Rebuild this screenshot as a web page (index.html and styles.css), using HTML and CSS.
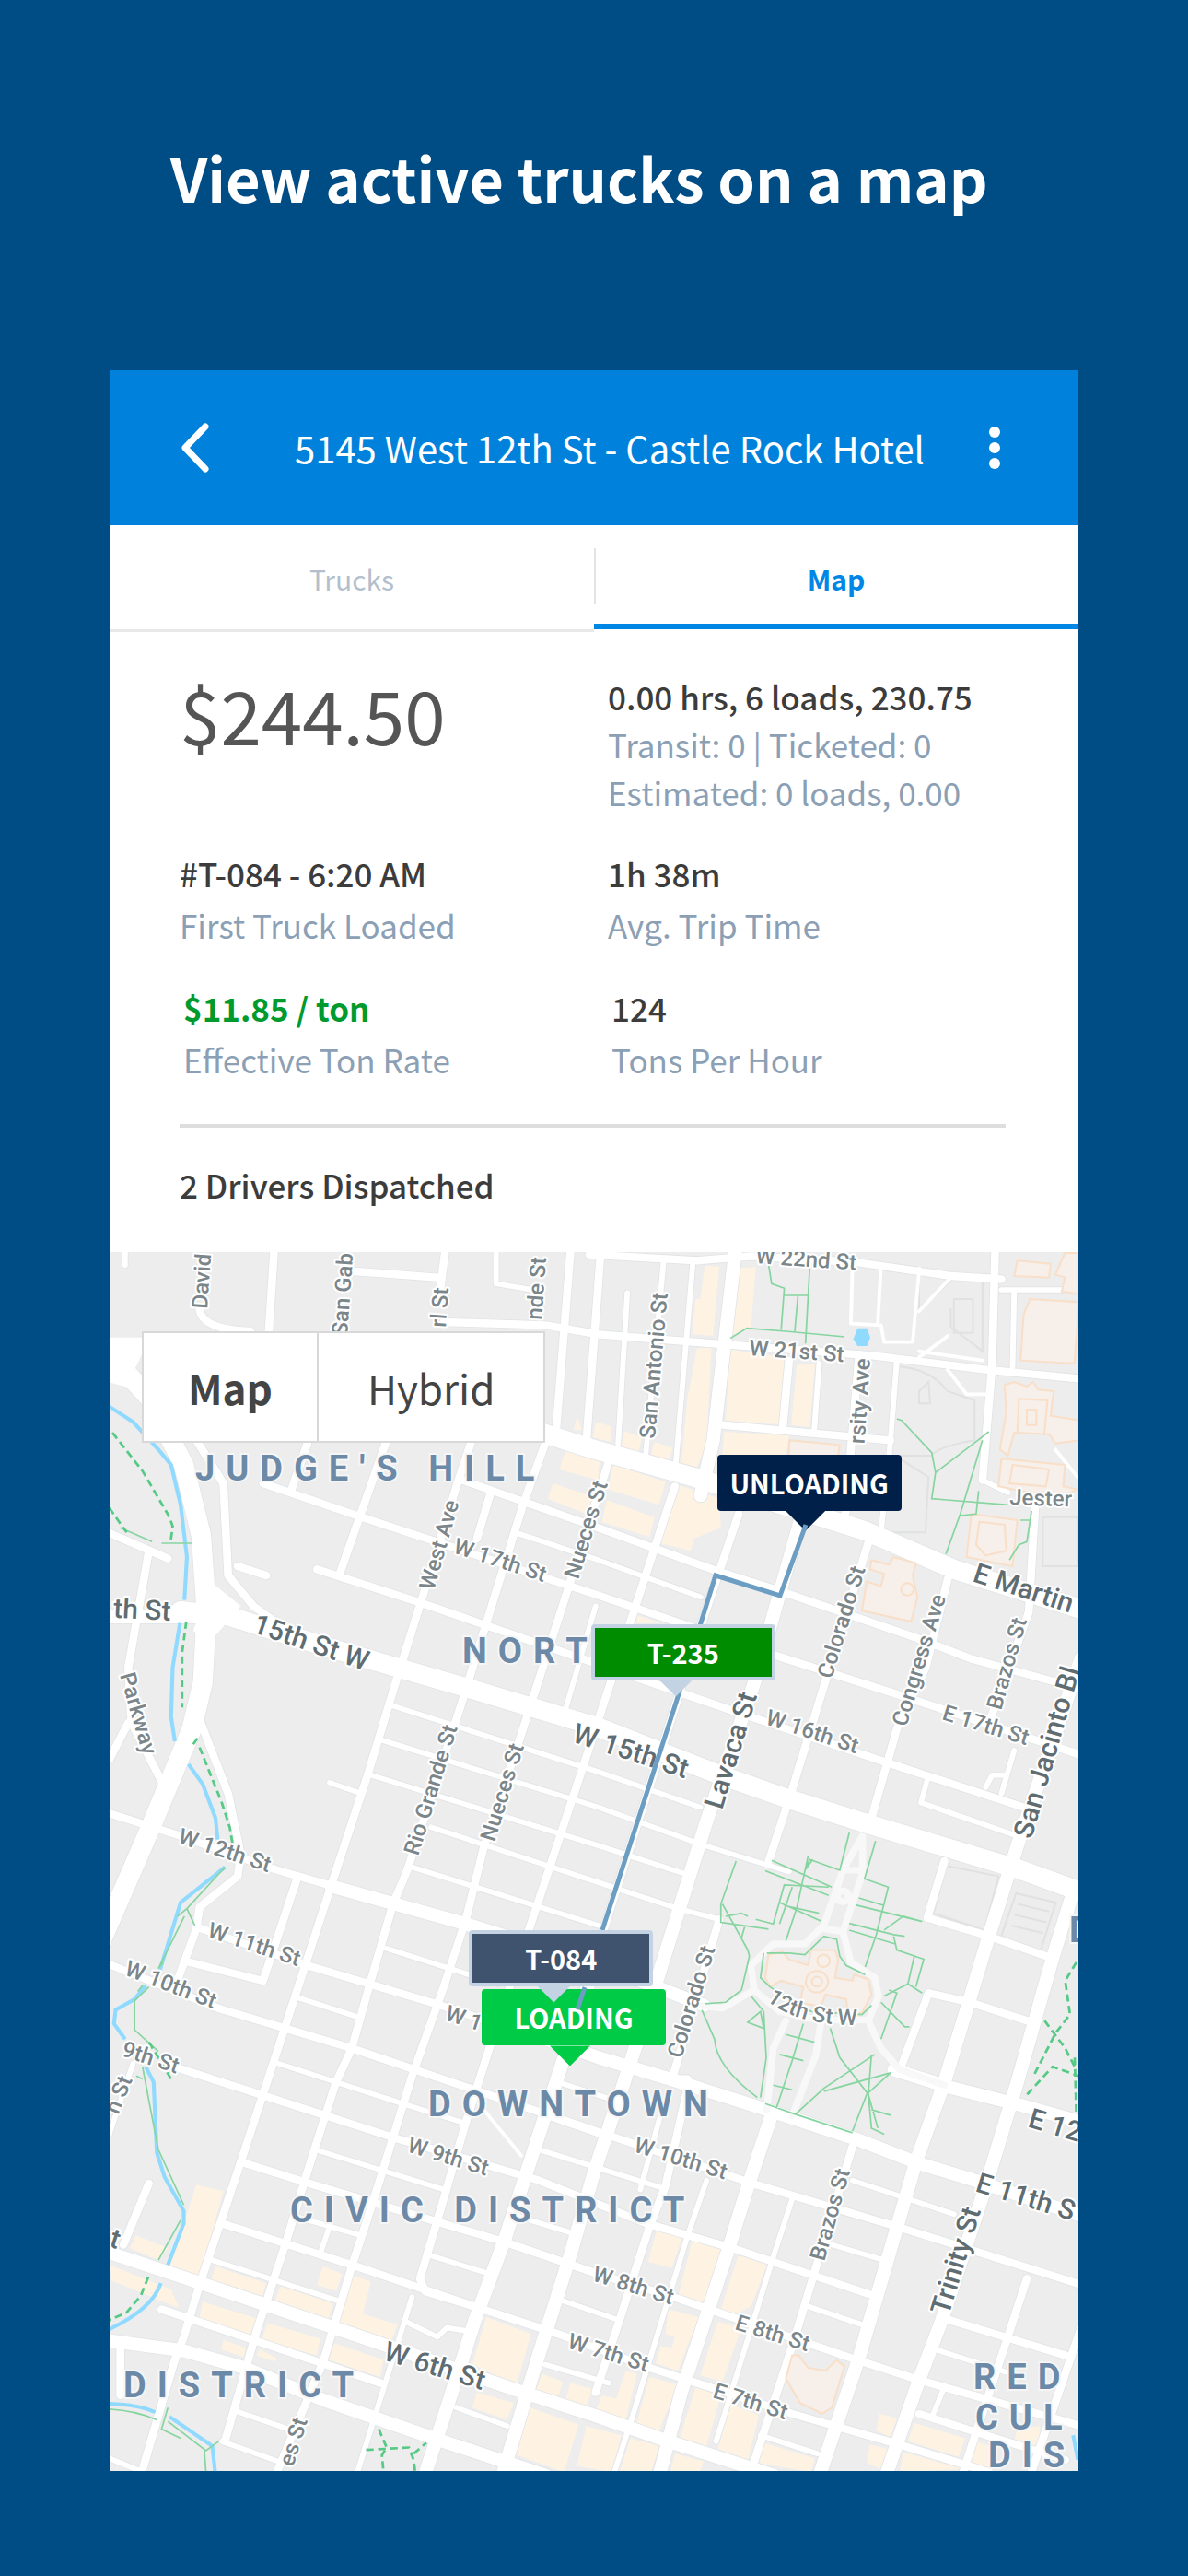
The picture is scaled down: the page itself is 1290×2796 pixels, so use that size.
FILE: index.html
```html
<!DOCTYPE html>
<html lang="en">
<head>
<meta charset="utf-8">
<meta name="viewport" content="width=device-width, initial-scale=1">
<title>View active trucks on a map</title>
<link rel="stylesheet" href="styles.css">
</head>
<body>
<h1 class="headline">View active trucks on a map</h1>
<main class="phone">
  <header class="bar">
    <button class="icon-button" type="button" aria-label="Back">
      <svg width="32" height="56" viewBox="0 0 32 56"><path class="chevron" d="M28 5 6 28l22 23"/></svg>
    </button>
    <h2 class="bar-title">5145 West 12th St - Castle Rock Hotel</h2>
    <button class="icon-button" type="button" aria-label="More options">
      <svg width="14" height="48" viewBox="0 0 14 48" fill="#fff"><circle cx="7" cy="7" r="6"/><circle cx="7" cy="24" r="6"/><circle cx="7" cy="41" r="6"/></svg>
    </button>
  </header>
  <nav class="tabs">
    <a class="tab" href="#trucks">Trucks</a>
    <a class="tab tab-active" href="#map" aria-current="page">Map</a>
  </nav>
  <section class="details">
    <div class="row row-top">
      <p class="amount">$244.50</p>
      <div>
        <p class="value">0.00 hrs, 6 loads, 230.75</p>
        <p class="label">Transit: 0 | Ticketed: 0</p>
        <p class="label">Estimated: 0 loads, 0.00</p>
      </div>
    </div>
    <div class="row">
      <div><p class="value">#T-084 - 6:20 AM</p><p class="label">First Truck Loaded</p></div>
      <div><p class="value">1h 38m</p><p class="label">Avg. Trip Time</p></div>
    </div>
    <div class="row row-inset">
      <div><p class="value value-rate">$11.85 / ton</p><p class="label">Effective Ton Rate</p></div>
      <div><p class="value">124</p><p class="label">Tons Per Hour</p></div>
    </div>
    <hr class="rule">
    <p class="value">2 Drivers Dispatched</p>
  </section>
  <section class="map" id="map" aria-label="Map">
    <svg class="map-art" viewBox="0 0 1052 1323">
      <defs>
        <g id="roads-large">
          <path d="M1000 470 1390 615 1539 665 1869 760 2409 935 2689 1060 3090 1190"/>
          <path d="M250 1195 400 1212 700 1310 1150 1445 1568 1575 1939 1725 2159 1805 2419 1890 2889 2035 3090 2110"/>
          <path d="M0 330 150 500 260 720 315 950 332 1200 320 1430 285 1580 160 1890 0 2270"/>
        </g>
        <g id="roads-wide">
          <path d="M25 1215H300M2000 20 1965 330 1930 640 1890 820M1540 2400 1450 2680 1270 3250 1180 3500 1090 3790 1020 4010"/>
          <path d="M2205 900 2059 1430 1909 1880 1749 2410 1649 2730 1555 3020 1480 3290 1370 3650 1265 4010"/>
          <path d="M2110 2850 2039 3070 1979 3270 1829 3740 1760 4010M3090 1350 2889 1960 2799 2255 2659 2730 2569 2990 2389 3630 2265 4010"/>
          <path d="M3059 2130 2999 2330 2889 2730 2789 3070 2649 3510 2579 3700 2475 4010M1400 2590 1568 2650 1809 2725 2099 2820 2379 2915 2579 2995 2739 3045 3090 3165"/>
          <path d="M2500 2690 2669 2745 2900 2805 3090 2860M10 3280 300 3380 720 3525 1330 3740 1568 3820 1789 3900 2120 4010M10 3570 260 3605 450 3660 700 3765 1050 3890 1400 4010M725 2092 1150 2215 1600 2360 1900 2480"/>
        </g>
        <g id="roads-small">
          <path d="M10 1850 240 1925 540 2035 740 2095M510 780 820 890 1568 1145 1739 1205 2139 1345 2519 1470 3090 1665M1140 770 1568 925 1939 1065 2139 1130 2589 1290 2739 1350 3090 1450M680 1060 1010 1170 1989 1520 2479 1690 2909 1835"/>
          <path d="M300 2225 650 2350 1070 2480 1420 2600M10 2340 370 2490 790 2620 1619 2910 2069 3065 2539 3210 3090 3390M230 2680 920 2910 1380 3050 1719 3190 1989 3270 2419 3420M440 2990 640 3055 1270 3250 1568 3355 1819 3435 2369 3630 2579 3700 3090 3850M380 3190 790 3325 1190 3465 1440 3550 1729 3660 2179 3810 2499 3905 2800 4000"/>
          <path d="M1165 650 1120 790 1010 1160 925 1440 840 1730 725 2090 640 2360 510 2770 440 2990 375 3190 310 3390 260 3560 230 3640 125 4010M900 640 750 1080M650 650 600 800M1225 820 1185 960"/>
          <path d="M1400 650 1330 850 1210 1250 1135 1500 965 2040 920 2150 850 2400 790 2620 740 2730 640 3055 580 3260 490 3540 390 3900M1600 710 1470 1130 1330 1580 1205 1970 1150 2200 1080 2420 980 2710 860 3110 790 3330 700 3640 550 4010"/>
          <path d="M1809 790 1669 1230 1530 1670 1350 2230 1230 2600 1150 2860 1080 3110 1005 3370 1022 3412 1190 3465M2010 880 1889 1250 1809 1510 1579 2250M2420 970 2279 1440 2175 1790 2105 2010M1949 2200 1800 2720 1849 2720M1849 2750 1779 3070 1729 3200 1639 3490 1559 3740"/>
          <path d="M2670 1090 2600 1380 2509 1580 2429 1870M2945 860 2925 1200 2800 1560M2369 2940 2249 3350 2179 3590 2045 4010M2659 2010 2605 2195 2799 2255 3009 2330M2519 2690 2609 2440 2739 2470 2919 2530M3090 3530 2930 4010M2919 3370 2859 3560 2759 3870 2715 4010M2659 3500 3040 3620M2579 3810 2759 3870 3040 3960"/>
          <path d="M310 1550 400 1790 440 1990 430 2060 310 2160 300 2230 240 2400M300 640 385 780 400 1080 480 1180 600 1270M430 1050 520 1080M10 935 210 1025M150 1000 85 1380 95 1560 200 1770M85 1560 25 1680M260 2335 510 2400 615 2075M60 3600V3750M150 3060 70 3260M190 3470 480 3570 880 3710"/>
          <path d="M1080 255 1400 265 1568 295 1869 320 2439 365 2789 410 3090 440M1539 35 1880 55 2050 40 2380 60 2680 105 2839 115M1959 590 2489 640M2390 360 2345 900M545 20 528 290M310 215Q320 280 470 285M1085 20 1070 140M800 90 1060 110M1480 20 1435 600M1574 40 1530 640M2819 20 2809 400 2779 770M2169 380 2149 600"/>
        </g>
        <g id="roads-tiny">
          <path d="M920 1505 1568 1720 1889 1835M880 1615 1568 1835 1889 1955 2169 2045M850 1730 1568 1960 1850 2055M720 1755 820 1790M1040 1900 1568 2080 1819 2165 1949 2200M980 2030 1568 2220M900 2295 1250 2410M620 2455 800 2515M560 2670 950 2800 1150 2865M690 2955 1080 3080M350 3310 740 3440M1040 3295 1210 3350M620 3170 820 3230M690 3290 720 3200"/>
          <path d="M1320 945 1568 1030 1890 1150M1559 1180 1460 1530M1380 2950 1568 3010 1770 3075M1440 2730 1620 2790M1450 3440 1619 3500M960 3510 1060 3560 1090 3530 1150 3540M1400 3650 1600 3710M1120 3790 1280 3850M1290 3160 1480 3220M420 3800 590 3860M380 3900 570 3970M25 3955 130 4000M980 3430 805 4010M1400 2840 1568 2900"/>
          <path d="M1909 3050 1849 3230 1669 3840 1615 4010M2179 3110 2119 3300 1939 3900M2369 3050 2689 3160M2289 3255 2469 3310M2229 3460 2399 3520M2629 3600 2900 3690M2079 3880 2259 3940M2660 3720 2620 3820M1760 2850 1700 3080"/>
          <path d="M1245 20V130L1360 150M75 20V70M1774 50 1715 710M1865 70 1809 750M1659 160 1630 650M2264 390 2249 600M2509 380 2489 640 2459 940M2605 1745 2585 1820 2879 1925M2789 1770 2810 1730H2850M2879 1650 2839 1790M2879 160 2874 400M2779 770 2860 810M100 2670 25 2900M2839 150H3030"/>
        </g>
        <g id="drives">
          <path d="M2369 75 2364 260 2459 265 2469 320H2559L2580 80M2459 70 2449 260M2679 110 2579 220M2579 350 2779 380M2669 410 2729 490H2799M3009 670 3079 760M1190 2800 1325 2970M2670 300 2579 370"/>
        </g>
      </defs>
      <rect class="land" width="1052" height="1323"/>
      <g transform="translate(-9 -9) scale(.3443 .3333)">
        <g class="commerce">
          <path d="M1465 670 1568 700V770L1445 735ZM1425 780 1568 830 1530 880 1408 830ZM1500 560 1515 605H1490Z"/>
          <path transform="translate(1539 0)" d="M365 70 410 75 390 300 325 295 335 180H350ZM470 80 525 75 510 270 445 300ZM340 340H385L370 650 335 740 290 720 310 500ZM445 345 615 370 600 588 430 575ZM655 390 712 392 695 597 637 590ZM425 612 630 625 620 690H420ZM20 580 70 595 65 645 12 630ZM110 610 165 630 155 680 100 665ZM205 645 262 665 250 710 195 690ZM0 695 38 705 20 755 0 750ZM75 720 240 775 220 850 60 800ZM280 785 410 830 415 925 330 960 320 1000 225 975ZM55 835 205 890 190 955 40 905ZM150 1210 230 1235H150Z"/>
          <path transform="translate(0 2670)" d="M300 395 385 415 310 695 215 660ZM110 560 210 600 180 640 90 600ZM25 655 220 735 245 795 30 705ZM360 660 520 715 505 765 345 710ZM565 725 730 780 715 835 545 780ZM320 775 490 830 475 885 310 825ZM525 845 690 895 680 950 505 900ZM385 900 455 925 450 955 378 930ZM735 910 890 965 880 1020 718 965ZM500 930 555 960 545 970 490 950ZM700 660 760 685 740 740 680 720ZM795 690 850 710 825 815 935 850 915 900 750 850ZM1215 825 1355 880 1310 1045 1170 980ZM1390 1010 1455 1035 1440 1090 1370 1065ZM1480 1040 1550 1060 1530 1115 1465 1095ZM1185 1070 1300 1105 1280 1160 1170 1120ZM1350 1120 1505 1175 1460 1330 1310 1275ZM1530 1180 1640 1210 1610 1330 1500 1310Z"/>
          <path transform="translate(1539 2670)" d="M215 535 295 560 260 665 185 645ZM325 575 415 605 360 780 280 760ZM470 625 560 655 510 790 465 815 415 800ZM250 800 345 825 280 1000 210 975 225 920 260 925 270 890 240 880ZM405 840 480 860 420 1035 350 1015ZM115 1000 150 1010 115 1160 20 1130 40 1080 85 1090ZM190 1020 280 1045 220 1195 150 1170ZM335 1055 415 1080 370 1245 285 1220ZM445 1110 535 1145 500 1290 405 1255ZM130 1220 220 1245 195 1330H95ZM270 1270 360 1295 350 1330H255ZM550 1235 710 1285 700 1330 530 1300ZM915 1140 970 1155 950 1215 905 1195ZM885 1240 940 1255 920 1320 875 1300ZM1025 1170 1185 1220 1165 1280 1005 1230ZM1220 1230 1275 1250 1260 1330 1205 1300ZM1350 1190 1420 1180V1250L1340 1230ZM990 1265 1180 1320 980 1330Z"/>
        </g>
        <g class="campus">
          <path transform="translate(1539 0)" d="M1040 80V220L1150 110H1240V350L1140 270V210M1150 180V290H1210V180ZM980 400Q1080 410 1130 480L1215 510V640Q1100 660 1080 690H980M1040 520V480L1070 450 1075 520ZM980 700 1070 760 1060 940H950M1430 890H1540V1050H1430Z"/>
          <path d="M2665 2025 2830 2060 2785 2235 2625 2180ZM2885 2115 3010 2145 2960 2310 2835 2265ZM2890 2150 2990 2175M2880 2185 2980 2210M2870 2220 2970 2245"/>
        </g>
        <use href="#roads-tiny" class="road casing-tiny"/><use href="#roads-small" class="road casing-small"/><use href="#roads-wide" class="road casing-wide"/><use href="#roads-large" class="road casing-large"/>
        <use href="#drives" class="road drive"/>
        <use href="#roads-tiny" class="road tiny"/><use href="#roads-small" class="road small"/><use href="#roads-wide" class="road wide"/><use href="#roads-large" class="road large"/>
        <path fill="#fff" d="M20 305H130V355L105 410 130 480 20 450ZM345 1100 440 1180 340 1300 290 1260Z"/>
        <g class="road park-drive" transform="translate(1539 1350)">
          <path d="M860 580 800 690 740 870 680 930H580L510 1000 520 1080 420 1140 350 1130M862 580V700L800 890 825 990 900 1040 912 1100 880 1180 920 1270 980 1340 1120 1390M520 1080 600 1150 720 1178H880M740 880 800 890M620 1180 580 1270 560 1470M730 1190 715 1290 640 1490M800 690H855"/>
          <circle cx="800" cy="775" r="18"/>
        </g>
        <g class="building">
          <path transform="translate(1539 0)" d="M632 640 790 655 785 690H628ZM1350 55 1455 65 1450 110 1340 105ZM1500 30H1545V165L1490 155 1500 110 1470 100ZM1390 180 1545 190 1530 390 1360 380 1370 230ZM1310 460 1340 450 1380 465 1400 450 1415 475 1465 480 1455 560 1545 575V640L1470 650 1450 620 1340 615 1320 690 1295 670 1315 550ZM1300 700 1500 720 1495 790 1540 800 1480 830 1290 790ZM1335 720 1450 735 1440 790 1325 780ZM1380 540H1410V590H1380ZM1355 505 1445 510 1435 620 1350 615ZM1205 880 1350 900 1335 1050 1190 1020ZM1230 905 1310 915 1315 1000 1250 1015 1220 980ZM890 1030 945 1045 960 1020 1030 1040 1020 1080 1035 1150 1015 1230 860 1195 875 1100 920 1115 930 1075 885 1060Z"/>
          <path transform="translate(1539 1350)" d="M565 965 610 955 630 980 690 1000 700 950H775L785 980 775 1040 830 1050 835 1030 880 1045 890 1095 860 1155 815 1150 810 1110 745 1095 730 1135 665 1120 675 1070 605 1050 570 1070 555 1040Z"/>
          <circle cx="2257" cy="2403" r="35"/><circle cx="2257" cy="2403" r="16"/><circle cx="2278" cy="2335" r="20"/><circle cx="2542" cy="1125" r="20"/>
          <path d="M2179 3620 2199 3620 2229 3660 2284 3670 2319 3635 2344 3655 2304 3790 2274 3810 2204 3775 2159 3695Z"/>
        </g>
        <g class="water">
          <path d="M25 530 100 580 180 670 220 720 250 850 270 1020 262 1160M248 1235 225 1380 220 1540 232 1620M275 1695 320 1760 360 1870 367 1940M390 2030 250 2145 185 2365M140 2415 105 2460 45 2495 40 2540 75 2590M140 2680 165 2730 175 2960 200 3040 260 3150V3190L210 3325M188 3385Q160 3470 25 3535M25 3777Q120 3780 170 3805M215 3820 350 3915 360 4010M3065 3880 3080 3960"/>
          <path fill="#90daff" stroke="none" d="M2385 275H2415L2425 305 2415 333H2385L2372 310Z"/>
        </g>
        <g class="trail">
          <path d="M190 975H285M60 925 160 970M390 2030 270 2165 240 2190M262 2190 180 2360 195 2340M270 2165 295 2220M150 2420 105 2465V2560L180 2630M130 2415 115 2435M130 2680 150 2790 180 2950 260 3130M250 3180 180 3310M25 3795Q110 3800 175 3830M210 3790 190 3860 250 3890M210 3835 330 3930 370 3900M325 3930 330 4000M130 2720 110 2710"/>
          <path transform="translate(1539 0)" d="M565 65 575 130 615 145 605 280M695 80 682 325M615 168H690M658 170 648 285M445 308 497 275 620 285 805 303M970 570 985 575 1080 680 1092 745 1080 830 1320 850M1092 745 1225 640 1260 612M1240 640 1170 880 1125 1010M1228 805 1220 880 1170 885M1395 870 1380 970 1355 980 1325 1030M1360 900H1390"/>
          <path transform="translate(1539 1350)" d="M820 568 790 690 695 655 680 690M575 658 765 745M555 692 755 772M903 595 868 718 943 745 905 900 870 1005M850 780 930 805M840 803 1050 857 990 840 930 885M690 645 655 810 620 920M705 655 680 690M755 745 615 738 580 865 525 850M640 745 600 865M600 795 730 855M615 805 725 830M463 660 415 800 415 860 565 882M420 800 500 950 505 970 480 1080 430 1120 365 1125M430 840 480 830 500 840M490 875 480 910M820 863 960 900 995 905M820 885 965 930M960 905 970 950 1055 980 1030 1070M1025 970 1005 1060M930 1100 1005 1060 1050 1090M920 1120 995 1200H1010M945 1080 970 1090 920 1240M510 1100 550 1150 558 1300 540 1430M500 1185 540 1150 550 1205ZM355 1145 395 1240Q400 1330 530 1430M760 1205 790 1300 880 1420 910 1530M675 1190 640 1310 590 1465M620 1225 710 1250M600 1290 675 1310M580 1390 640 1405M650 1485 740 1400 900 1290M740 1410 950 1350 875 1420 830 1540M890 1290 880 1420 890 1530 930 1550M890 1470 950 1488M555 1450 650 1485 830 1545M550 960 540 1040 570 1070 700 1150 860 1160 890 1130M560 960 630 960 680 965 740 905 780 915 790 970 810 1000 870 1030"/>
        </g>
        <g class="trail dashed">
          <path d="M35 615 130 740 215 890 225 920 218 975M25 860 80 940M268 1230 255 1330V1510M290 1630 310 1600M310 1640 380 1820 405 1900 415 1960M150 2600 180 2650 220 2720M148 3365 125 3425 80 3480 25 3505M875 3860 900 3920 885 3945 890 4000M835 3928 970 3920 985 3960 990 4000M985 3940 1025 3905"/>
          <path d="M3075 2340 3040 2400 3055 2510 3010 2570 2940 2710M2975 2530 3040 2620 3075 2690M2920 2770 3000 2680 3082 2710M3070 2650 3075 2830"/>
        </g>
      </g>
      <path id="capitol-curve" fill="none" d="M713 812Q744 838 806 839"/>
      <g class="street">
        <text transform="translate(73 641) rotate(18)">W 12th St</text>
        <text transform="translate(105 743) rotate(18)">W 11th St</text>
        <text transform="translate(15 784) rotate(21)">W 10th St</text>
        <text transform="translate(12 872) rotate(18)">9th St</text>
        <text transform="translate(11 459) rotate(74)">Parkway</text>
        <text transform="translate(106 62) rotate(-86)">David</text>
        <text transform="translate(258 91) rotate(-86)">San Gab</text>
        <text text-anchor="end" transform="translate(368 39) rotate(-86)">rl St</text>
        <text text-anchor="end" transform="translate(474 6) rotate(-86)">nde St</text>
        <text transform="translate(592 203) rotate(-85)">San Antonio St</text>
        <text transform="translate(701 12) rotate(4)">W 22nd St</text>
        <text transform="translate(694 112) rotate(4)">W 21st St</text>
        <text text-anchor="end" transform="translate(826 116) rotate(-86)">rsity Ave</text>
        <text transform="translate(352 368) rotate(-74)">West Ave</text>
        <text transform="translate(372 326) rotate(18)">W 17th St</text>
        <text transform="translate(509 356) rotate(-73)">Nueces St</text>
        <text transform="translate(784 464) rotate(-73)">Colorado St</text>
        <text transform="translate(865 516) rotate(-73)">Congress Ave</text>
        <text transform="translate(968 498) rotate(-74)">Brazos St</text>
        <text transform="translate(903 507) rotate(17)">E 17th St</text>
        <text transform="translate(711 512) rotate(18)">W 16th St</text>
        <text transform="translate(335 656) rotate(-73)">Rio Grande St</text>
        <text transform="translate(418 641) rotate(-73)">Nueces St</text>
        <text transform="translate(363 833) rotate(18)">W 1</text>
        <text transform="translate(621 876) rotate(-73)">Colorado St</text>
        <text transform="translate(977 274) rotate(2)">Jester</text>
        <text transform="translate(776 1096) rotate(-74)">Brazos St</text>
        <text transform="translate(568 976) rotate(17)">W 10th St</text>
        <text transform="translate(322 976) rotate(17)">W 9th St</text>
        <text transform="translate(523 1116) rotate(17)">W 8th St</text>
        <text transform="translate(678 1169) rotate(17)">E 8th St</text>
        <text transform="translate(654 1243) rotate(17)">E 7th St</text>
        <text transform="translate(496 1189) rotate(17)">W 7th St</text>
        <text text-anchor="end" transform="translate(25 898) rotate(-68)">n St</text>
        <text text-anchor="end" transform="translate(215 1268) rotate(-73)">es St</text>
        <text><textPath href="#capitol-curve">12th St W</textPath></text>
      </g>
      <g class="street avenue">
        <text transform="translate(154 412) rotate(19)">15th St W</text>
        <text text-anchor="end" transform="translate(66 400) rotate(3)">th St</text>
        <text transform="translate(665 606) rotate(-73)">Lavaca St</text>
        <text transform="translate(1001 638) rotate(-74)">San Jacinto Bl</text>
        <text transform="translate(501 531) rotate(18)">W 15th St</text>
        <text transform="translate(936 357) rotate(18)">E Martin</text>
        <text transform="translate(996 949) rotate(17)">E 12</text>
        <text transform="translate(939 1019) rotate(17)">E 11th S</text>
        <text transform="translate(911 1155) rotate(-73)">Trinity St</text>
        <text transform="translate(296 1202) rotate(17)">W 6th St</text>
        <text text-anchor="end" transform="translate(8 1082) rotate(18)">t</text>
      </g>
      <g class="area">
        <text x="93" y="248">JUDGE'S HILL</text>
        <text x="383" y="446">NORT</text>
        <text x="346" y="938">DOWNTOWN</text>
        <text x="196" y="1053">CIVIC DISTRICT</text>
        <text x="15" y="1243">DISTRICT</text>
        <text x="938" y="1234">RED</text>
        <text x="940" y="1278">CUL</text>
        <text x="954" y="1319">DIS</text>
        <text x="1042" y="749">D</text>
      </g>
    </svg>
    <span class="marker unloading">UNLOADING</span>
    <span class="marker loading">LOADING</span>
    <svg class="route" viewBox="0 0 1052 1323"><path d="M756 296 728 373 658 351 616 486 535 736M516 798 508 822"/></svg>
    <span class="marker truck truck-235">T-235</span>
    <span class="marker truck truck-084">T-084</span>
    <div class="map-type" role="group" aria-label="Map type">
      <button class="type-button type-active" type="button" aria-pressed="true">Map</button>
      <button class="type-button" type="button" aria-pressed="false">Hybrid</button>
    </div>
  </section>
</main>
</body>
</html>
```
FILE: styles.css
```css
* { box-sizing: border-box; }
body {
  margin: 0;
  padding: 0 119px 114px;
  background: #004c84;
  font-family: "Noto Sans CJK JP", "Noto Sans", sans-serif;
  color: #333;
}
h1, h2, p { margin: 0; }
button { font: inherit; color: inherit; background: none; border: 0; padding: 0; }
.headline {
  padding: 142px 66px 160px;
  color: #fff;
  font-size: 65px;
  font-weight: 700;
  line-height: 100px;
  white-space: nowrap;
}
.phone { background: #fff; }
.bar {
  display: flex;
  align-items: center;
  justify-content: space-between;
  height: 168px;
  padding: 0 84px 0 76px;
  background: #0082dc;
  color: #fff;
}
.icon-button { display: flex; }
.chevron { fill: none; stroke: #fff; stroke-width: 7; stroke-linecap: round; stroke-linejoin: round; }
.bar-title { font-size: 40px; font-weight: 400; line-height: 56px; white-space: nowrap; padding-left: 24px; }
.tabs { display: grid; grid-template-columns: 1fr 1fr; position: relative; }
.tab {
  display: flex;
  align-items: center;
  justify-content: center;
  height: 116px;
  padding-top: 2px;
  border-bottom: 3px solid #e8e8e8;
  color: #b3bfcc;
  font-size: 30px;
  text-decoration: none;
}
.tab-active { height: 113px; padding-top: 8px; border-bottom: 6px solid #0087e6; color: #0087e6; font-weight: 700; }
.tabs::after { content: ""; position: absolute; left: 50%; top: 25px; bottom: 30px; width: 2px; background: #e4e4e4; }
.details {
  display: flex;
  flex-direction: column;
  gap: 34px;
  padding: 44px 79px 45px 76px;
}
.row { display: grid; grid-template-columns: 465px 1fr; line-height: 56px; }
.row-top { line-height: 52px; }
.row-inset { padding-left: 4px; }
.amount { color: #555; font-size: 80px; line-height: 88px; }
.value { color: #3c3c3c; font-size: 35px; font-weight: 500; line-height: inherit; }
.label { color: #8ca0b5; font-size: 35px; }
.value-rate { color: #009a2e; font-weight: 700; }
.rule { width: 100%; height: 4px; margin: 8px 0 0; border: 0; background: #dedede; }
.details > .value { line-height: 56px; }
.map { position: relative; overflow: hidden; }
.map-art { display: block; width: 100%; }
.land { fill: #ededed; }
.commerce { fill: #fef3e3; }
.campus { fill: none; stroke: #e0e1e1; stroke-width: 6; }
.building { fill: #f6efea; stroke: #f9dfc8; stroke-width: 6; }
.road { fill: none; stroke: #fff; stroke-linecap: round; stroke-linejoin: round; }
.tiny { stroke-width: 17; }
.small { stroke-width: 25; }
.wide { stroke-width: 42; }
.large { stroke-width: 62; }
.casing-tiny, .casing-small, .casing-wide, .casing-large { stroke: #e1e4e6; }
.casing-tiny { stroke-width: 22; }
.casing-small { stroke-width: 30; }
.casing-wide { stroke-width: 47; }
.casing-large { stroke-width: 67; }
.drive { stroke-width: 11; }
.park-drive { stroke: #f8f8f8; stroke-width: 22; }
.water { fill: none; stroke: #90daff; stroke-width: 12; }
.trail { fill: none; stroke: #86d5a0; stroke-width: 5; }
.dashed { stroke: #55c985; stroke-width: 8; stroke-dasharray: 24 14; }
.street {
  fill: #7b868b;
  stroke: #fff;
  stroke-width: 4px;
  stroke-linejoin: round;
  paint-order: stroke;
  font: 500 24px Roboto, sans-serif;
}
.avenue { fill: #5f6d72; font-size: 30px; }
.area {
  fill: #6c8aa8;
  stroke: #f6f6f6;
  stroke-width: 4px;
  paint-order: stroke;
  font: 700 38px Roboto, sans-serif;
  letter-spacing: 12px;
}
.route { position: absolute; inset: 0; width: 100%; fill: none; stroke: #6c9dc2; stroke-width: 5; }
.marker {
  position: absolute;
  width: 200px;
  height: 61px;
  border-radius: 4px;
  color: #fff;
  font-size: 29px;
  font-weight: 700;
  line-height: 60px;
  text-align: center;
}
.marker::after {
  content: "";
  position: absolute;
  left: 50%;
  top: 100%;
  width: 44px;
  height: 22px;
  margin-left: -26px;
  background: inherit;
  clip-path: polygon(0 0, 100% 0, 50% 100%);
}
.unloading { left: 62.7%; top: 16.6%; background: #00204a; }
.loading { left: 38.4%; top: 60.5%; background: #00cb46; }
.truck { border: 4px solid #c4d3e4; line-height: 52px; }
.truck::after { background: #c4d3e4; margin-left: -30px; }
.truck-235 { left: 49.7%; top: 30.5%; background: #008c00; }
.truck-084 { left: 37.1%; top: 55.6%; background: #40536e; }
.map-type {
  position: absolute;
  left: 35px;
  top: 86px;
  display: flex;
  height: 121px;
  border: 2px solid #d8d8d8;
  background: #fff;
  color: #444;
  font-size: 44px;
}
.type-button { padding: 0 53px; }
.type-active { padding: 0 48px; border-right: 2px solid #d8d8d8; font-weight: 700; }
```
